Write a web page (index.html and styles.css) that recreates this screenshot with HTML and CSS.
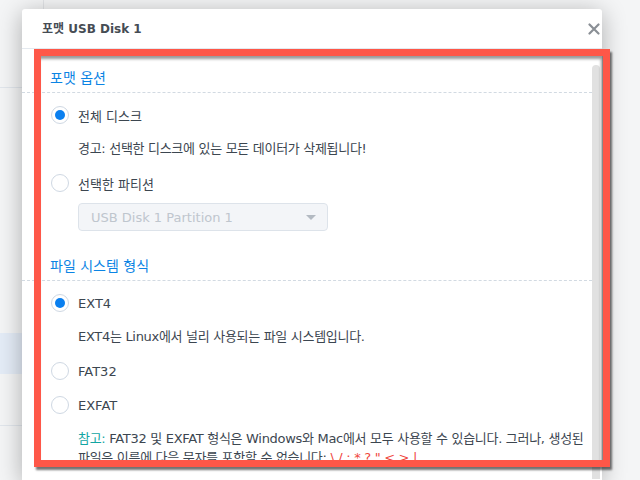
FILE: index.html
```html
<!DOCTYPE html>
<html lang="ko">
<head>
    <meta charset="UTF-8">
    <title>포맷 USB Disk 1</title>
    <link rel="stylesheet" href="styles.css">
</head>
<body>

    <!-- Background list (behind the dialog) -->
    <div class="desk">
        <div class="desk-head"><div class="desk-col"></div></div>
        <div class="desk-space"></div>
        <div class="desk-row selected"></div>
        <div class="desk-row last"></div>
    </div>

    <!-- Format dialog -->
    <div class="dialog">
        <div class="dialog-head">
            <span class="dialog-title">포맷 USB Disk 1</span>
            <svg class="close" width="12" height="12" viewBox="0 0 12 12">
                <path d="M1.5 1.5 L10.5 10.5 M10.5 1.5 L1.5 10.5" stroke="#8a8f95" stroke-width="2.2" stroke-linecap="round"/>
            </svg>
        </div>

        <div class="dialog-body">
            <div class="section-title">포맷 옵션</div>
            <div class="options">
                <div class="radio-row"><span class="radio checked"></span>전체 디스크</div>
                <div class="hint">경고: 선택한 디스크에 있는 모든 데이터가 삭제됩니다!</div>
                <div class="radio-row"><span class="radio"></span>선택한 파티션</div>
                <div class="select disabled">
                    <span>USB Disk 1 Partition 1</span>
                    <span class="caret"></span>
                </div>
            </div>

            <div class="section-title second">파일 시스템 형식</div>
            <div class="options">
                <div class="radio-row"><span class="radio checked"></span>EXT4</div>
                <div class="hint">EXT4는 Linux에서 널리 사용되는 파일 시스템입니다.</div>
                <div class="radio-row"><span class="radio"></span>FAT32</div>
                <div class="radio-row"><span class="radio"></span>EXFAT</div>
                <div class="note">
                    <span class="note-label">참고:</span> FAT32 및 EXFAT 형식은 Windows와 Mac에서 모두 사용할 수 있습니다. 그러나, 생성된<br>
                    파일은 이름에 다음 문자를 포함할 수 없습니다: <span class="bad-chars">\ / : * ? " &lt; &gt; |</span>
                </div>
            </div>

            <div class="scrollbar"></div>
        </div>
    </div>

    <!-- Highlight frame -->
    <div class="highlight"></div>

</body>
</html>
```

FILE: styles.css
```css
* {
    margin: 0;
    padding: 0;
    box-sizing: border-box;
}

body {
    font-family: "DejaVu Sans", "Noto Sans CJK KR", sans-serif;
    font-size: 13px;
    color: #3c4650;
    background-color: #f4f5f6;
    width: 640px;
    height: 480px;
    overflow: hidden;
    position: relative;
}

/* background list */
.desk {
    width: 300px;
    display: flex;
    flex-direction: column;
}

.desk-head {
    height: 88px;
    border-bottom: 1px solid #e1e6ec;
}

.desk-col {
    margin-left: 43px;
    height: 100%;
    border-left: 1px solid #e2e4e7;
}

.desk-space {
    height: 245px;
}

.desk-row {
    height: 41px;
}

.desk-row.selected {
    background-color: #e4ecf7;
}

.desk-row.last {
    height: 52px;
    border-bottom: 1px solid #e1e6ec;
}

/* dialog */
.dialog {
    position: absolute;
    left: 22px;
    top: 9px;
    width: 580px;
    height: 471px;
    background-color: #fff;
    border-radius: 3px 3px 0 0;
    box-shadow: 0 4px 24px rgba(0, 0, 0, 0.3);
    overflow: hidden;
}

.dialog-head {
    height: 40px;
    padding: 0 0 0 20px;
    display: flex;
    align-items: center;
    justify-content: space-between;
    border-bottom: 1px solid #e4e9ef;
}

.dialog-title {
    font-size: 12px;
    font-weight: bold;
    color: #464c54;
    padding-bottom: 2px;
}

.close {
    margin-right: 2px;
    margin-top: 1px;
}

.dialog-body {
    position: relative;
    padding-top: 19px;
    height: 430px;
    overflow: hidden;
}

.section-title {
    font-size: 14px;
    line-height: 20px;
    color: #0b84e4;
    padding: 0 0 4px 28px;
    border-bottom: 1px dashed #d2dae2;
    margin-right: 10px;
}

.section-title.second {
    margin-top: 25px;
}

.options {
    padding: 5px 12px 0 29px;
}

.radio-row {
    height: 34px;
    display: flex;
    align-items: center;
    gap: 9px;
}

.radio {
    width: 18px;
    height: 18px;
    border: 1px solid #cfd8e3;
    border-radius: 50%;
    display: flex;
    align-items: center;
    justify-content: center;
    background-color: #fff;
}

.radio.checked::after {
    content: "";
    width: 10px;
    height: 10px;
    border-radius: 50%;
    background-color: #0a7fef;
}

.hint {
    height: 34px;
    line-height: 34px;
    padding-left: 27px;
    letter-spacing: -0.3px;
}

.select {
    margin: 3px 0 0 27px;
    width: 250px;
    height: 28px;
    padding: 0 11px 0 12px;
    display: flex;
    align-items: center;
    justify-content: space-between;
    border: 1px solid #dde3ea;
    border-radius: 4px;
}

.select.disabled {
    background-color: #f3f5f8;
    color: #bfc6ce;
}

.caret {
    width: 0;
    height: 0;
    border-left: 5px solid transparent;
    border-right: 5px solid transparent;
    border-top: 5px solid #b3bac2;
}

.note {
    margin-top: 7px;
    padding-left: 27px;
    line-height: 19px;
    white-space: nowrap;
    letter-spacing: -0.3px;
}

.note-label {
    color: #12a5a2;
}

.bad-chars {
    color: #f0473d;
}

.scrollbar {
    position: absolute;
    right: 2px;
    top: 16px;
    width: 8px;
    height: 420px;
    border-radius: 4px 4px 0 0;
    background-color: #e1e1e1;
}

/* red annotation frame */
.highlight {
    position: absolute;
    left: 34px;
    top: 49px;
    width: 576px;
    height: 418px;
    border: 7px solid #fe5748;
    box-shadow: 2px 3px 2px rgba(0, 0, 0, 0.55), inset -2px 3px 3px rgba(0, 0, 0, 0.4);
}
```
